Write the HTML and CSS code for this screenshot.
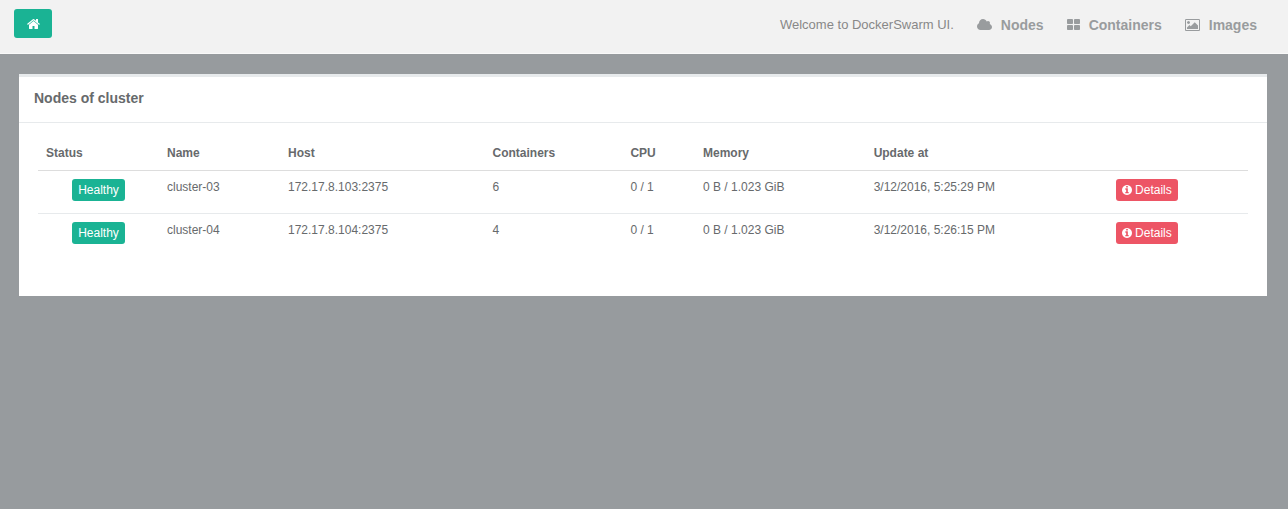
FILE: index.html
```html
<!DOCTYPE html>
<html lang="en">
<head>
<meta charset="utf-8">
<title>DockerSwarm UI</title>
<link rel="stylesheet" href="styles.css">
</head>
<body>
<svg class="sprite" aria-hidden="true">
  <symbol id="home" viewBox="64 0 1664 1792"><path d="M1472 992v480q0 26-19 45t-45 19h-384v-384h-256v384h-384q-26 0-45-19t-19-45v-480q0-1 .5-3t.5-3l575-474 575 474q1 2 1 6zm223-69l-62 74q-8 9-21 11h-3q-13 0-21-7l-692-577-692 577q-12 8-24 7-13-2-21-11l-62-74q-8-10-7-23.5t11-21.5l719-599q32-26 76-26t76 26l244 204v-195q0-14 9-23t23-9h192q14 0 23 9t9 23v408l219 182q10 8 11 21.5t-7 23.5z"/></symbol>
  <symbol id="cloud" viewBox="64 0 1920 1792"><path d="M1984 1152q0 159-112.500 271.500t-271.500 112.500h-1088q-185 0-316.500-131.500t-131.500-316.500q0-132 71-241.500t187-163.500q-2-28-2-43 0-212 150-362t362-150q158 0 286.500 88t187.500 230q70-62 166-62 106 0 181 75t75 181q0 75-41 138 129 30 213 134.500t84 239.500z"/></symbol>
  <symbol id="grid" viewBox="64 0 1664 1792"><path d="M832 1024v384q0 52-38 90t-90 38h-512q-52 0-90-38t-38-90v-384q0-52 38-90t90-38h512q52 0 90 38t38 90zm0-768v384q0 52-38 90t-90 38h-512q-52 0-90-38t-38-90v-384q0-52 38-90t90-38h512q52 0 90 38t38 90zm896 768v384q0 52-38 90t-90 38h-512q-52 0-90-38t-38-90v-384q0-52 38-90t90-38h512q52 0 90 38t38 90zm0-768v384q0 52-38 90t-90 38h-512q-52 0-90-38t-38-90v-384q0-52 38-90t90-38h512q52 0 90 38t38 90z"/></symbol>
  <symbol id="picture" viewBox="-64 0 1920 1792"><path d="M576 576q0 80-56 136t-136 56-136-56-56-136 56-136 136-56 136 56 56 136zm1024 384v448h-1408v-192l320-320 160 160 512-512zm96-704h-1600q-13 0-22.500 9.500t-9.500 22.500v1216q0 13 9.500 22.500t22.500 9.500h1600q13 0 22.500-9.500t9.500-22.500v-1216q0-13-9.500-22.500t-22.500-9.500zm160 32v1216q0 66-47 113t-113 47h-1600q-66 0-113-47t-47-113v-1216q0-66 47-113t113-47h1600q66 0 113 47t47 113z"/></symbol>
  <symbol id="info" viewBox="128 128 1536 1536"><path d="M1152 1376v-160q0-14-9-23t-23-9h-96v-512q0-14-9-23t-23-9h-320q-14 0-23 9t-9 23v160q0 14 9 23t23 9h96v320h-96q-14 0-23 9t-9 23v160q0 14 9 23t23 9h448q14 0 23-9t9-23zm-128-896v-160q0-14-9-23t-23-9h-192q-14 0-23 9t-9 23v160q0 14 9 23t23 9h192q14 0 23-9t9-23zm640 416q0 209-103 385.500t-279.500 279.500-385.500 103-385.500-103-279.500-279.500-103-385.500 103-385.500 279.500-279.500 385.500-103 385.500 103 279.500 279.500 103 385.500z"/></symbol>
</svg>
<header class="topbar">
  <a class="home" href="#" aria-label="Home"><svg class="icon icon-home"><use href="#home"/></svg></a>
  <nav class="nav">
    <span class="welcome">Welcome to DockerSwarm UI.</span>
    <a class="nav-link" href="#"><svg class="icon icon-wide"><use href="#cloud"/></svg>Nodes</a>
    <a class="nav-link" href="#"><svg class="icon icon-square"><use href="#grid"/></svg>Containers</a>
    <a class="nav-link" href="#"><svg class="icon icon-wide"><use href="#picture"/></svg>Images</a>
  </nav>
</header>
<main class="panel">
  <h1 class="panel-title">Nodes of cluster</h1>
  <div class="panel-body">
    <table class="nodes">
      <colgroup>
        <col class="col-status"><col class="col-name"><col class="col-host"><col class="col-containers"><col class="col-cpu"><col class="col-memory"><col class="col-update"><col class="col-action">
      </colgroup>
      <thead>
        <tr><th>Status</th><th>Name</th><th>Host</th><th>Containers</th><th>CPU</th><th>Memory</th><th>Update at</th><th></th></tr>
      </thead>
      <tbody>
        <tr>
          <td class="center"><button class="btn btn-primary" type="button">Healthy</button></td>
          <td>cluster-03</td><td>172.17.8.103:2375</td><td>6</td><td>0 / 1</td><td>0 B / 1.023 GiB</td><td>3/12/2016, 5:25:29 PM</td>
          <td class="center"><button class="btn btn-danger" type="button"><svg class="icon icon-info"><use href="#info"/></svg>Details</button></td>
        </tr>
        <tr>
          <td class="center"><button class="btn btn-primary" type="button">Healthy</button></td>
          <td>cluster-04</td><td>172.17.8.104:2375</td><td>4</td><td>0 / 1</td><td>0 B / 1.023 GiB</td><td>3/12/2016, 5:26:15 PM</td>
          <td class="center"><button class="btn btn-danger" type="button"><svg class="icon icon-info"><use href="#info"/></svg>Details</button></td>
        </tr>
      </tbody>
    </table>
  </div>
</main>
</body>
</html>
```
FILE: styles.css
```css
* {
  box-sizing: border-box;
}

body {
  margin: 0;
  background: #979b9e;
  color: #676a6c;
  font: 12px/16px "Liberation Sans", Arial, sans-serif;
}

.sprite {
  display: none;
}

.icon {
  display: block;
  flex: none;
  fill: currentColor;
}

.icon-home {
  width: 13px;
  height: 14px;
}

.icon-wide {
  width: 15px;
  height: 14px;
}

.icon-square {
  width: 13px;
  height: 14px;
}

.icon-info {
  width: 10px;
  height: 10px;
}

.topbar {
  display: flex;
  align-items: flex-start;
  justify-content: space-between;
  padding: 9px 31px 12px 14px;
  background: #f2f2f2;
  border-bottom: 1px solid #f9f9f9;
}

.home {
  display: flex;
  align-items: center;
  justify-content: center;
  width: 38px;
  height: 29px;
  border-radius: 3px;
  background: #1ab394;
  color: #fff;
}

.nav {
  display: flex;
  align-items: center;
  gap: 23px;
  height: 32px;
}

.welcome {
  color: #888;
  font-size: 13px;
}

.nav-link {
  display: flex;
  align-items: center;
  gap: 9px;
  color: #999c9e;
  font-size: 14px;
  font-weight: bold;
  text-decoration: none;
}

.panel {
  margin: 20px 21px 20px 19px;
  background: #fff;
  border-top: 3px solid #e7eaec;
}

.panel-title {
  margin: 0;
  padding: 13px 15px 16px;
  border-bottom: 1px solid #e7eaec;
  font-size: 14px;
  line-height: 16px;
}

.panel-body {
  padding: 14px 19px 40px;
}

.nodes {
  width: 100%;
  table-layout: fixed;
  border-collapse: separate;
  border-spacing: 0;
}

.nodes th,
.nodes td {
  padding: 8px;
  text-align: left;
  vertical-align: top;
}

.nodes th {
  padding-bottom: 9px;
  border-bottom: 1px solid #ddd;
}

.nodes td {
  height: 42px;
}

.nodes tbody tr + tr td {
  height: 43px;
  border-top: 1px solid #e7eaec;
}

.nodes .center {
  text-align: center;
}

.col-status,
.col-name {
  width: 10%;
}

.col-host {
  width: 16.9%;
}

.col-containers {
  width: 11.4%;
}

.col-cpu {
  width: 6%;
}

.col-memory {
  width: 14.1%;
}

.col-update {
  width: 14.9%;
}

.btn {
  display: inline-flex;
  align-items: center;
  gap: 3px;
  height: 22px;
  padding: 0 6px;
  border: 0;
  border-radius: 3px;
  color: #fff;
  font: inherit;
  vertical-align: top;
}

.btn-primary {
  background: #1ab394;
}

.btn-danger {
  background: #ed5565;
}
```
